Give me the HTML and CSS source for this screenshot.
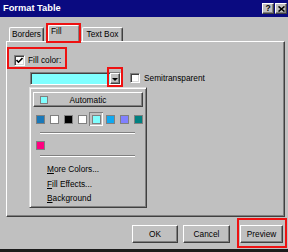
FILE: index.html
```
<!DOCTYPE html>
<html>
<head>
<meta charset="utf-8">
<title>Format Table</title>
<link rel="stylesheet" href="styles.css">
</head>
<body>
<div class="dialog">
  <div class="titlebar">
    <span class="title">Format Table</span>
    <span class="tbtn">?</span>
    <span class="tbtn"><svg width="7" height="6" viewBox="0 0 7 6"><path d="M0.5 0.5 L6.5 5.5 M6.5 0.5 L0.5 5.5" stroke="#000" stroke-width="1.6"/></svg></span>
  </div>
  <div class="tabs">
    <div class="tab t-borders">Borders</div>
    <div class="hl hl-tab"><div class="tab sel">Fill</div></div>
    <div class="tab t-text">Text Box</div>
  </div>
  <div class="panel">
    <div class="hl hl-fill">
      <span class="cb cb-fill"><svg width="7" height="7" viewBox="0 0 7 7"><path d="M0.5 3 L2.5 5.2 L6.5 1" fill="none" stroke="#000" stroke-width="1.6"/></svg></span>
      <span class="lbl">Fill color:</span>
    </div>
    <div class="colorrow">
      <div class="combo"><span class="arrow"></span></div>
      <span class="cb cb-semi"></span>
      <span class="lbl semi">Semitransparent</span>
    </div>
    <div class="popup">
      <div class="auto"><span class="auto-sw"></span><span class="auto-txt">Automatic</span></div>
      <div class="swrow">
        <span class="cell"><span class="sw c-blue"></span></span>
        <span class="cell"><span class="sw c-white"></span></span>
        <span class="cell"><span class="sw c-black"></span></span>
        <span class="cell"><span class="sw c-white"></span></span>
        <span class="cell on"><span class="sw c-cyan"></span></span>
        <span class="cell"><span class="sw c-sky"></span></span>
        <span class="cell"><span class="sw c-lav"></span></span>
        <span class="cell"><span class="sw c-teal"></span></span>
      </div>
      <div class="sep"></div>
      <div class="swrow row2">
        <span class="cell"><span class="sw c-mag"></span></span>
      </div>
      <div class="sep sep2"></div>
      <div class="items">
        <div class="item"><u>M</u>ore Colors...</div>
        <div class="item"><u>F</u>ill Effects...</div>
        <div class="item"><u>B</u>ackground</div>
      </div>
    </div>
  </div>
  <div class="footer">
    <button class="btn b-ok">OK</button>
    <button class="btn b-cancel">Cancel</button>
    <div class="hl hl-prev"><button class="btn b-prev">Preview</button></div>
  </div>
</div>
</body>
</html>
```
FILE: styles.css
```
* { box-sizing: border-box; margin: 0; padding: 0; }
html, body { width: 288px; height: 252px; overflow: hidden; }
body {
  font-family: "Liberation Sans", Arial, sans-serif;
  font-size: 8.3px;
  color: #000;
  background: #c0c0c0;
}
.dialog {
  width: 288px;
  height: 252px;
  background: #c0c0c0;
  display: flex;
  flex-direction: column;
  border-bottom: 3px solid #1c1c1c;
}
.titlebar {
  height: 17px;
  flex: none;
  background: #0a0a80;
  color: #fff;
  display: flex;
  align-items: flex-start;
  padding: 0 1px 0 3px;
}
.title { flex: 1; font-weight: bold; font-size: 9.3px; line-height: 17px; }
.tbtn {
  width: 12px;
  height: 11px;
  margin-top: 3px;
  background: #c0c0c0;
  border: 1px solid;
  border-color: #fff #404040 #404040 #fff;
  box-shadow: inset -1px -1px #808080;
  color: #000;
  font-weight: bold;
  font-size: 8.5px;
  line-height: 9px;
  display: flex;
  align-items: center;
  justify-content: center;
}
.tbtn + .tbtn { margin-left: 1px; }

.tabs {
  height: 24px;
  flex: none;
  display: flex;
  align-items: flex-end;
  padding-left: 9px;
}
.tab {
  height: 14px;
  border: 1px solid;
  border-bottom: 0;
  border-color: #fff #404040 transparent #fff;
  border-radius: 2px 2px 0 0;
  box-shadow: inset -1px 0 #808080;
  line-height: 13px;
  text-align: center;
}
.t-borders { width: 35px; }
.t-text { width: 41px; margin-left: 1px; }
.hl { border: 2px solid #ee1111; }
.hl-tab {
  width: 35px;
  height: 20px;
  margin-left: 2px;
  margin-bottom: -2px;
  position: relative;
  z-index: 1;
  background: #c0c0c0;
}
.tab.sel {
  height: 16px;
  width: 31px;
  line-height: 9px;
  padding-left: 1px;
  text-align: left;
  padding-top: 1px;
  padding-left: 2px;
  box-shadow: none;
  border-right-color: #808080;
}

.panel {
  margin-left: 6px;
  width: 279px;
  height: 176px;
  flex: none;
  border: 1px solid;
  border-color: #fff #404040 #404040 #fff;
  box-shadow: inset -1px -1px #808080;
}
.hl-fill {
  margin-top: 5px;
  width: 60px;
  height: 22px;
  display: flex;
  align-items: flex-end;
  padding: 0 0 1px 5px;
}
.cb {
  width: 11px;
  height: 11px;
  flex: none;
  background: #fff;
  border: 1px solid;
  border-color: #808080 #fff #fff #808080;
  box-shadow: inset 1px 1px #404040, inset -1px -1px #d8d8d8;
  display: flex;
  align-items: center;
  justify-content: center;
}
.lbl { line-height: 11px; margin-left: 3px; white-space: nowrap; }
.colorrow {
  margin: 3px 0 0 23px;
  display: flex;
  align-items: flex-start;
}
.combo {
  width: 91px;
  height: 13px;
  background: #80ffff;
  border: 1px solid;
  border-color: #808080 #fff #fff #808080;
  box-shadow: inset 1px 1px #404040;
  display: flex;
  justify-content: flex-end;
}
.arrow {
  position: relative;
  width: 10px;
  height: 11px;
  background: #c0c0c0;
  border: 1px solid;
  border-color: #fff #404040 #404040 #fff;
  box-shadow: inset -1px -1px #808080;
  display: flex;
  align-items: center;
  justify-content: center;
}
.arrow::before {
  content: "";
  border-left: 3px solid transparent;
  border-right: 3px solid transparent;
  border-top: 3px solid #000;
  margin-top: 1px;
}
.arrow::after {
  content: "";
  position: absolute;
  left: -4px;
  top: -7px;
  right: -4px;
  bottom: -4px;
  border: 2px solid #ee1111;
}
.cb-semi { width: 10px; height: 10px; margin: 1px 0 0 9px; }
.semi { margin-left: 4px; line-height: 12px; }

.popup {
  margin: 2px 0 0 22px;
  width: 118px;
  height: 121px;
  border: 1px solid;
  border-color: #dfdfdf #404040 #404040 #dfdfdf;
  box-shadow: inset 1px 1px #fff, inset -1px -1px #808080;
}
.auto {
  margin: 4px 0 0 3px;
  width: 110px;
  height: 15px;
  border: 1px solid;
  border-color: #fff #404040 #404040 #fff;
  box-shadow: inset -1px -1px #808080;
  display: flex;
  align-items: center;
}
.auto-sw {
  width: 8px;
  height: 8px;
  margin-left: 6px;
  background: #80ffff;
  border: 1px solid #808080;
}
.auto-txt { flex: 1; text-align: center; margin-right: 14px; }
.swrow { margin: 5px 0 0 3px; display: flex; }
.row2 { margin-top: 4px; }
.cell {
  width: 14px;
  height: 14px;
  display: flex;
  align-items: center;
  justify-content: center;
}
.cell.on { box-shadow: inset 1px 1px #808080, inset -1px -1px #fff; }
.sw { width: 9px; height: 9px; border: 1px solid #808080; }
.c-blue { background: #1a78b8; }
.c-white { background: #fff; }
.c-black { background: #000; }
.c-cyan { background: #80ffff; }
.c-sky { background: #10a8f0; }
.c-lav { background: #8080ff; }
.c-teal { background: #008080; }
.c-mag { background: #ff0080; }
.sep {
  margin: 6px 0 0 10px;
  width: 95px;
  height: 2px;
  border-top: 1px solid #808080;
  border-bottom: 1px solid #fff;
}
.sep2 { margin-top: 3px; }
.items { margin-top: 5px; }
.item { padding-left: 17px; line-height: 14.5px; }

.footer {
  margin-top: 1px;
  display: flex;
  align-items: flex-start;
  padding-left: 132px;
}
.btn {
  height: 18px;
  background: #c0c0c0;
  border: 1px solid;
  border-color: #fff #404040 #404040 #fff;
  box-shadow: inset -1px -1px #808080;
  font: inherit;
  color: #000;
  text-align: center;
}
.b-ok { width: 46px; margin-top: 7px; }
.b-cancel { width: 47px; margin: 7px 0 0 5px; }
.hl-prev { width: 50px; height: 30px; margin-left: 7px; }
.b-prev { width: 43px; margin: 5px 0 0 1px; }
```
